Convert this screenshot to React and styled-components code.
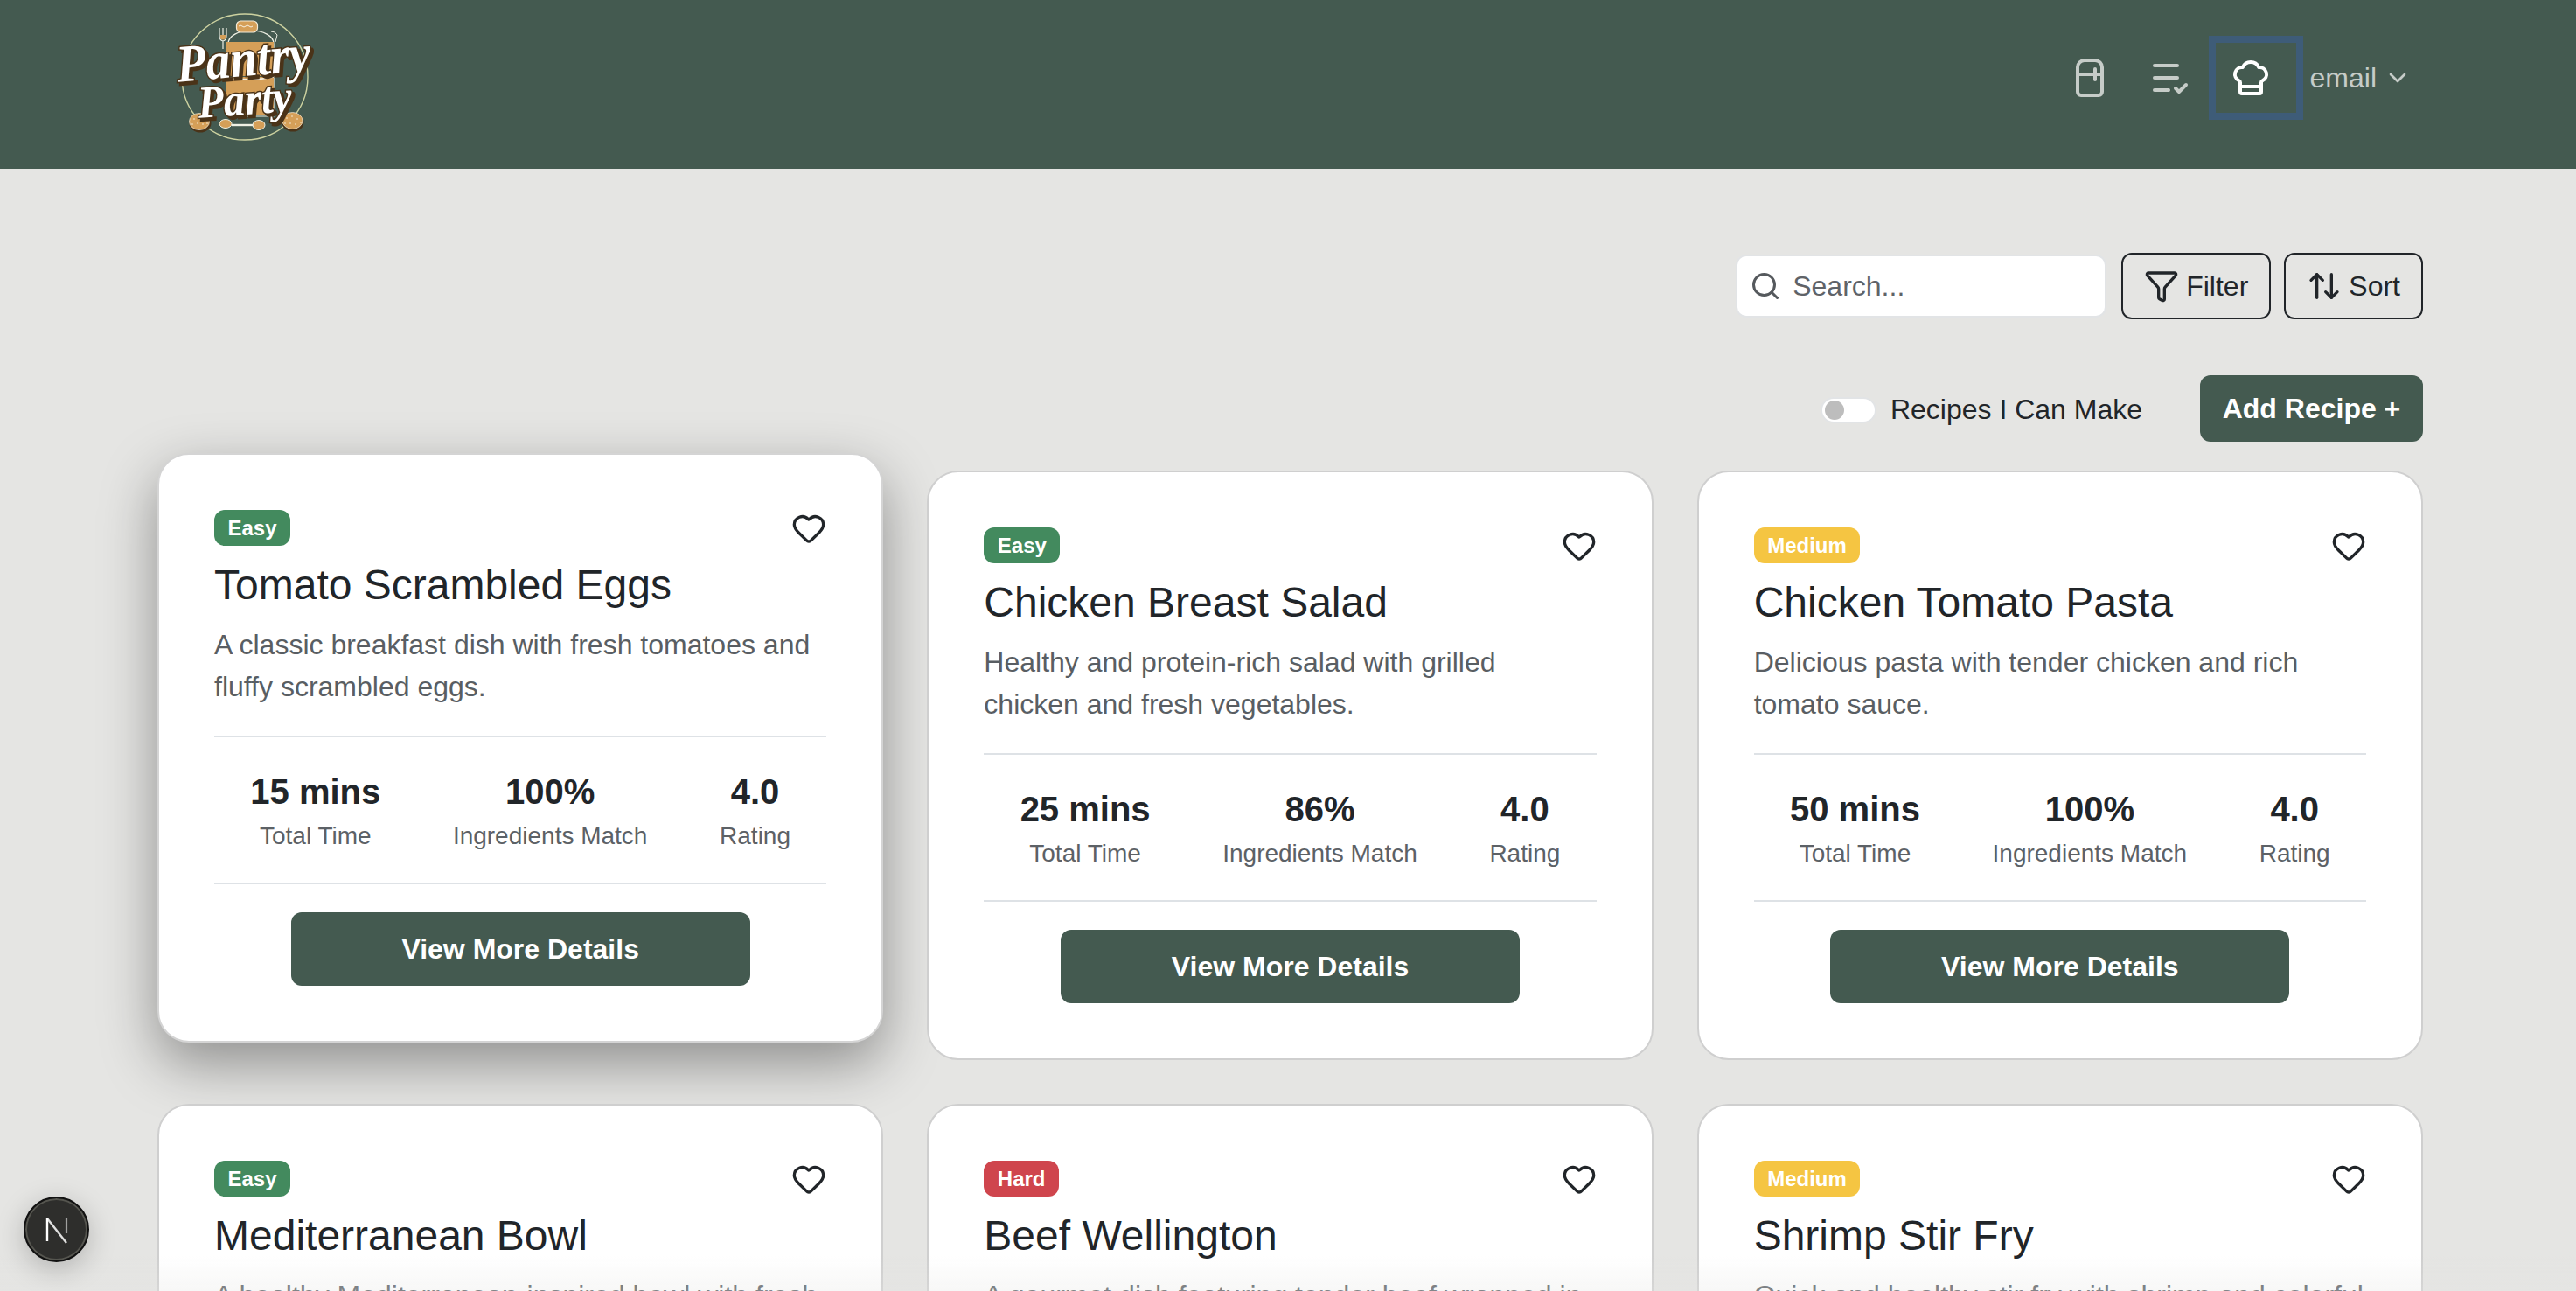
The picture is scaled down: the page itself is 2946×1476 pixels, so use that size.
import React from "react";
import styled, { createGlobalStyle } from "styled-components";
import {
  ArrowUpDown,
  ChefHat,
  ChevronDown,
  Funnel,
  Heart,
  ListCheck,
  Refrigerator,
  Search,
} from "lucide-react";

const GlobalStyle = createGlobalStyle`
  html, body {
    margin: 0;
    height: 100%;
    overflow: hidden;
    background: #e5e5e3;
    font-family: "Liberation Sans", Arial, sans-serif;
    color: #212529;
  }
  * { box-sizing: border-box; }
`;

const Page = styled.div`
  height: 100vh;
  overflow: hidden;
`;

const Header = styled.header`
  height: 193px;
  background: #445a50;
  display: flex;
  align-items: center;
  justify-content: space-between;
  padding: 0 12px 0 160px;
`;

const Logo = styled.svg`
  width: 240px;
  height: 193px;
  display: block;
`;

const Nav = styled.nav`
  display: flex;
  align-items: center;
  margin-right: 176px;
  margin-bottom: 15px;
`;

const NavLink = styled.a`
  width: 92px;
  height: 80px;
  display: flex;
  align-items: center;
  padding-left: 16px;
  color: ${(p) => (p.$active ? "#ffffff" : "#c6ccc8")};
  outline: ${(p) => (p.$active ? "8px solid #3e5c78" : "none")};
`;

const UserMenu = styled.div`
  display: flex;
  align-items: center;
  margin-left: 16px;
  gap: 8px;
  font-size: 32px;
  color: #c6ccc8;
`;

const Main = styled.main`
  padding: 96px 175px 0 180px;
`;

const Toolbar = styled.div`
  display: flex;
  justify-content: flex-end;
  align-items: center;
  gap: 15px;
`;

const SearchBox = styled.label`
  width: 424px;
  height: 72px;
  margin-right: 2px;
  background: #ffffff;
  border: 2px solid #e2e4e6;
  border-radius: 12px;
  display: flex;
  align-items: center;
  gap: 13px;
  padding-left: 14px;
  color: #55595d;
`;

const SearchInput = styled.input`
  border: 0;
  outline: 0;
  flex: 1;
  min-width: 0;
  padding: 0;
  background: transparent;
  font: inherit;
  font-size: 32px;
  &::placeholder {
    color: #5f6368;
    opacity: 1;
  }
`;

const OutlineButton = styled.button`
  height: 76px;
  padding: 0 24px;
  display: flex;
  align-items: center;
  gap: 8px;
  background: transparent;
  border: 2px solid #212529;
  border-radius: 12px;
  font: inherit;
  font-size: 32px;
  color: #212529;
`;

const ActionRow = styled.div`
  display: flex;
  justify-content: flex-end;
  align-items: center;
  margin-top: 64px;
  margin-bottom: 33px;
`;

const ToggleLabel = styled.label`
  display: flex;
  align-items: center;
  gap: 16px;
  padding-top: 3px;
  font-size: 32px;
  color: #212529;
  margin-right: 66px;
`;

const Toggle = styled.span`
  width: 64px;
  height: 30px;
  border-radius: 15px;
  background: #ffffff;
  border: 2px solid #e2e4e6;
  display: flex;
  align-items: center;
  padding-left: 3px;
  &::before {
    content: "";
    width: 22px;
    height: 22px;
    border-radius: 50%;
    background: #bdbdbd;
  }
`;

const SolidButton = styled.button`
  height: ${(p) => (p.$wide ? "84px" : "76px")};
  width: ${(p) => (p.$wide ? "75%" : "255px")};
  background: #445a50;
  border: 0;
  border-radius: 12px;
  color: #ffffff;
  font: inherit;
  font-size: 32px;
  font-weight: 700;
  display: block;
`;

const Grid = styled.div`
  display: grid;
  grid-template-columns: repeat(3, 1fr);
  gap: 50px;
`;

// every card is positioned so a later card paints over the lifted card's shadow
const Card = styled.article`
  position: relative;
  background: #ffffff;
  border: 2px solid ${(p) => (p.$lifted ? "#d4d4d4" : "#cfcfcf")};
  border-radius: 36px;
  padding: 63px 63px;
  transform: ${(p) => (p.$lifted ? "translateY(-20px)" : "none")};
  box-shadow: ${(p) => (p.$lifted ? "0 24px 64px rgba(0, 0, 0, 0.38)" : "none")};
`;

const CardTop = styled.div`
  display: flex;
  align-items: center;
  justify-content: space-between;
  height: 41px;
`;

const badgeColors = {
  Easy: "#438a5e",
  Medium: "#f5c542",
  Hard: "#cf454d",
};

const Badge = styled.span`
  height: 41px;
  padding: 0 15.5px;
  display: flex;
  align-items: center;
  border-radius: 12px;
  background: ${(p) => badgeColors[p.$level]};
  color: #ffffff;
  font-size: 24px;
  font-weight: 700;
`;

const HeartIcon = styled(Heart)`
  color: #212529;
  display: block;
`;

const Title = styled.h3`
  margin: 9px 0 8px;
  font-size: 48px;
  line-height: 72px;
  font-weight: 400;
  color: #212529;
`;

const Description = styled.p`
  margin: 0 0 32px;
  font-size: 32px;
  line-height: 48px;
  color: #595e63;
`;

const Stats = styled.div`
  display: flex;
  justify-content: space-around;
  padding: 32px 0;
  border-top: 2px solid #dee2e6;
  border-bottom: 2px solid #dee2e6;
  margin-bottom: 32px;
`;

const Stat = styled.div`
  text-align: center;
`;

const StatValue = styled.div`
  font-size: 40px;
  line-height: 60px;
  font-weight: 700;
  color: #212529;
`;

const StatLabel = styled.div`
  font-size: 28px;
  line-height: 42px;
  color: #5c6166;
`;

const CardAction = styled.div`
  display: flex;
  justify-content: center;
`;

const BottomFade = styled.div`
  position: fixed;
  left: 0;
  right: 0;
  bottom: 0;
  height: 40px;
  background: linear-gradient(to bottom, rgba(229, 229, 227, 0), rgba(229, 229, 227, 0.3));
  pointer-events: none;
`;

const DevBadge = styled.div`
  position: fixed;
  left: 27px;
  bottom: 33px;
  width: 75px;
  height: 75px;
  border-radius: 50%;
  background: #2e2e2c;
  border: 2px solid #111111;
  box-shadow: inset 0 0 0 2px #55554f, 0 8px 32px rgba(0, 0, 0, 0.22);
  display: flex;
  align-items: center;
  justify-content: center;
`;

const recipes = [
  {
    level: "Easy",
    name: "Tomato Scrambled Eggs",
    text: "A classic breakfast dish with fresh tomatoes and fluffy scrambled eggs.",
    time: "15 mins",
    match: "100%",
    rating: "4.0",
    lifted: true,
  },
  {
    level: "Easy",
    name: "Chicken Breast Salad",
    text: "Healthy and protein-rich salad with grilled chicken and fresh vegetables.",
    time: "25 mins",
    match: "86%",
    rating: "4.0",
  },
  {
    level: "Medium",
    name: "Chicken Tomato Pasta",
    text: "Delicious pasta with tender chicken and rich tomato sauce.",
    time: "50 mins",
    match: "100%",
    rating: "4.0",
  },
  {
    level: "Easy",
    name: "Mediterranean Bowl",
    text: "A healthy Mediterranean-inspired bowl with fresh vegetables and grains.",
    time: "30 mins",
    match: "80%",
    rating: "4.0",
  },
  {
    level: "Hard",
    name: "Beef Wellington",
    text: "A gourmet dish featuring tender beef wrapped in flaky pastry.",
    time: "120 mins",
    match: "70%",
    rating: "4.0",
  },
  {
    level: "Medium",
    name: "Shrimp Stir Fry",
    text: "Quick and healthy stir fry with shrimp and colorful vegetables.",
    time: "35 mins",
    match: "75%",
    rating: "4.0",
  },
];

const breadDots = [
  [62, 136], [68, 134], [74, 136], [60, 142], [66, 141], [72, 142], [77, 141],
  [168, 135], [174, 133], [180, 136], [166, 141], [172, 141], [178, 142], [184, 140],
];

const PantryLogo = () => (
  <Logo viewBox="0 0 240 193" aria-label="Pantry Party">
    <circle cx="120" cy="88" r="72" fill="none" stroke="#cdd2a0" strokeWidth="1.4" />
    <path
      d="M101 133V50c0-9 12-15 26-15s26 6 26 15v83z"
      fill="#445a50"
      stroke="#eef0e4"
      strokeWidth="1.2"
    />
    <path d="M98 48h55v39H98zM98 88h55v44H98z" fill="#d59f58" />
    <path d="M97 88q28 6 56 0" fill="none" stroke="#f4efe0" strokeWidth="1.6" />
    <rect x="110.5" y="24" width="24" height="13" rx="5" fill="#d59f58" stroke="#f3ead6" strokeWidth="1.2" />
    <path d="M113 30q2-2 4 0t4 0 4 0 4 0" fill="none" stroke="#f7f1e2" strokeWidth="1" />
    <path d="M91 32v9q0 5 4 6 4-1 4-6v-9M95 32v12M95 47v9" fill="none" stroke="#eef0e4" strokeWidth="1.2" />
    <path d="M92 40h6v4q-3 3-6 0z" fill="#d59f58" />
    <path d="M150 36q5 0 7 4l-2 8" fill="none" stroke="#eef0e4" strokeWidth="1" />
    <ellipse cx="69" cy="141" rx="12.5" ry="10.5" fill="#4a3318" />
    <ellipse cx="175" cy="140" rx="12.5" ry="10.5" fill="#4a3318" />
    <ellipse cx="68" cy="139" rx="11.5" ry="9.5" fill="#d59f58" stroke="#f3ead6" strokeWidth="0.7" />
    <ellipse cx="174.5" cy="138" rx="11.5" ry="9.5" fill="#d59f58" stroke="#f3ead6" strokeWidth="0.7" />
    {breadDots.map(([cx, cy]) => (
      <circle key={`${cx}-${cy}`} cx={cx} cy={cy} r="0.8" fill="#f7efdc" />
    ))}
    <path d="M105 143h28" stroke="#eef0e4" strokeWidth="2.4" />
    <ellipse cx="98" cy="141.5" rx="7" ry="5" fill="#d59f58" stroke="#eef0e4" strokeWidth="1" />
    <ellipse cx="136" cy="143" rx="7" ry="5.5" fill="#d59f58" stroke="#eef0e4" strokeWidth="1" />
    <g
      fill="#ffffff"
      stroke="#4a3318"
      strokeWidth="3"
      paintOrder="stroke"
      fontFamily='"Liberation Serif", serif'
      fontStyle="italic"
      fontWeight="700"
      style={{ filter: "drop-shadow(3px 3px 0 #4a3318)" }}
    >
      <text x="43" y="87" fontSize="60" textLength="154" lengthAdjust="spacingAndGlyphs" transform="rotate(-5 120 87)">
        Pantry
      </text>
      <text x="67" y="131" fontSize="52" textLength="108" lengthAdjust="spacingAndGlyphs" transform="rotate(-4 120 131)">
        Party
      </text>
    </g>
  </Logo>
);

const RecipeCard = ({ recipe }) => (
  <Card $lifted={recipe.lifted}>
    <CardTop>
      <Badge $level={recipe.level}>{recipe.level}</Badge>
      <HeartIcon size={40} strokeWidth={2} />
    </CardTop>
    <Title>{recipe.name}</Title>
    <Description>{recipe.text}</Description>
    <Stats>
      <Stat>
        <StatValue>{recipe.time}</StatValue>
        <StatLabel>Total Time</StatLabel>
      </Stat>
      <Stat>
        <StatValue>{recipe.match}</StatValue>
        <StatLabel>Ingredients Match</StatLabel>
      </Stat>
      <Stat>
        <StatValue>{recipe.rating}</StatValue>
        <StatLabel>Rating</StatLabel>
      </Stat>
    </Stats>
    <CardAction>
      <SolidButton $wide>View More Details</SolidButton>
    </CardAction>
  </Card>
);

const App = () => (
  <Page>
    <GlobalStyle />
    <Header>
      <PantryLogo />
      <Nav>
        <NavLink>
          <Refrigerator size={48} strokeWidth={2} />
        </NavLink>
        <NavLink>
          <ListCheck size={48} strokeWidth={2} />
        </NavLink>
        <NavLink $active>
          <ChefHat size={48} strokeWidth={2} />
        </NavLink>
        <UserMenu>
          email
          <ChevronDown size={32} strokeWidth={2} />
        </UserMenu>
      </Nav>
    </Header>
    <Main>
      <Toolbar>
        <SearchBox>
          <Search size={36} strokeWidth={2} />
          <SearchInput placeholder="Search..." />
        </SearchBox>
        <OutlineButton>
          <Funnel size={40} strokeWidth={2} />
          Filter
        </OutlineButton>
        <OutlineButton>
          <ArrowUpDown size={40} strokeWidth={2} />
          Sort
        </OutlineButton>
      </Toolbar>
      <ActionRow>
        <ToggleLabel>
          <Toggle />
          Recipes I Can Make
        </ToggleLabel>
        <SolidButton>Add Recipe +</SolidButton>
      </ActionRow>
      <Grid>
        {recipes.map((recipe) => (
          <RecipeCard key={recipe.name} recipe={recipe} />
        ))}
      </Grid>
    </Main>
    <BottomFade />
    <DevBadge>
      <svg width="40" height="40" viewBox="0 0 40 40" fill="none">
        <path d="M9 7v26" stroke="#ffffff" strokeWidth="2.4" />
        <path d="M9 7l22 28" stroke="#ffffff" strokeWidth="2.4" opacity="0.85" />
        <path d="M31 7v17" stroke="#ffffff" strokeWidth="2.2" opacity="0.55" />
      </svg>
    </DevBadge>
  </Page>
);

export default App;
